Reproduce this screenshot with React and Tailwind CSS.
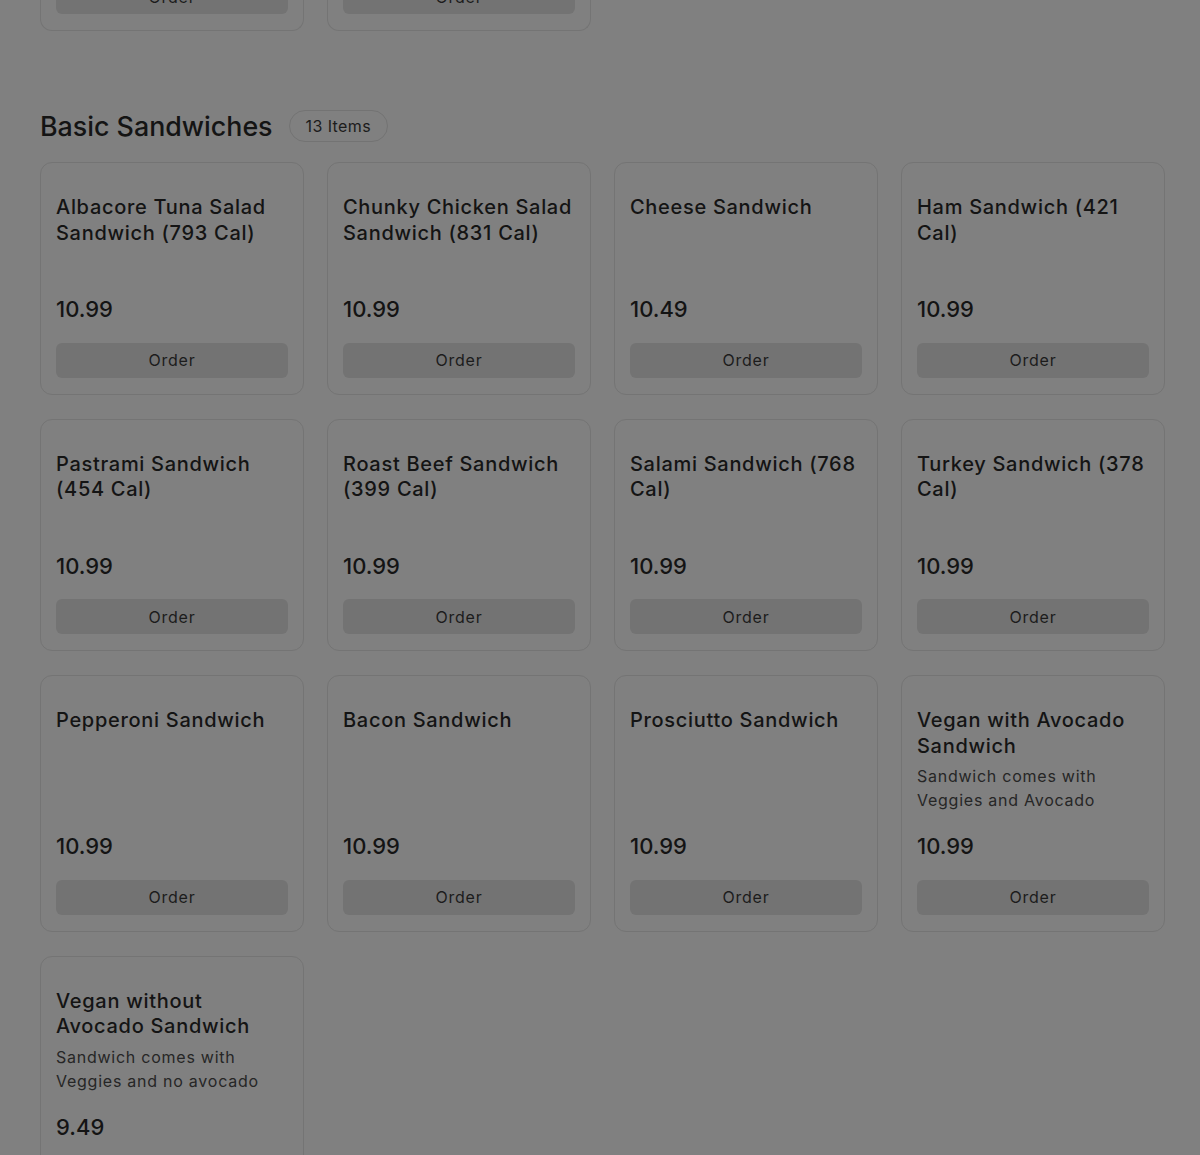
import React from "react";

const items = [
  { name: "Albacore Tuna Salad Sandwich (793 Cal)", price: "10.99" },
  { name: "Chunky Chicken Salad Sandwich (831 Cal)", price: "10.99" },
  { name: "Cheese Sandwich", price: "10.49" },
  { name: "Ham Sandwich (421 Cal)", price: "10.99" },
  { name: "Pastrami Sandwich (454 Cal)", price: "10.99" },
  { name: "Roast Beef Sandwich (399 Cal)", price: "10.99" },
  { name: "Salami Sandwich (768 Cal)", price: "10.99" },
  { name: "Turkey Sandwich (378 Cal)", price: "10.99" },
  { name: "Pepperoni Sandwich", price: "10.99" },
  { name: "Bacon Sandwich", price: "10.99" },
  { name: "Prosciutto Sandwich", price: "10.99" },
  {
    name: "Vegan with Avocado Sandwich",
    desc: "Sandwich comes with Veggies and Avocado",
    price: "10.99",
  },
  {
    name: "Vegan without Avocado Sandwich",
    desc: "Sandwich comes with Veggies and no avocado",
    price: "9.49",
  },
];

function OrderButton() {
  return (
    <button className="h-[35px] w-full rounded-[6px] bg-[#737373] text-[16px] tracking-[0.8px] text-[#1c1c1c]">
      Order
    </button>
  );
}

function Card({ item }) {
  return (
    <div className="flex flex-col rounded-[12px] border border-[#747474] px-[15px] pt-8 pb-4">
      <div className="min-h-[80px]">
        <h3 className="text-[20px] font-medium leading-[25.5px] tracking-[0.7px] text-[#141414]">
          {item.name}
        </h3>
        {item.desc && (
          <p className="mt-[5px] text-[16px] leading-[24px] tracking-[0.75px] text-[#262626]">
            {item.desc}
          </p>
        )}
      </div>
      <div className="mt-auto pt-[18px] text-[22px] font-medium leading-[32px] text-[#141414]">
        {item.price}
      </div>
      <div className="mt-[17.5px]">
        <OrderButton />
      </div>
    </div>
  );
}

export default function App() {
  return (
    <div
      className="min-h-screen bg-[#808080] pl-10"
      style={{ fontFamily: "Inter, 'Liberation Sans', sans-serif" }}
    >
      {/* tail of previous section, scrolled past the top */}
      <div className="flex h-[31px] flex-col justify-end overflow-hidden">
        <div className="grid w-[1125px] grid-cols-4 gap-x-[23px]">
          {[0, 1].map((i) => (
            <div
              key={i}
              className="rounded-b-[12px] border border-t-0 border-[#747474] px-[15px] pb-4"
            >
              <OrderButton />
            </div>
          ))}
        </div>
      </div>

      <section className="mt-[77px]">
        <div className="flex h-[36px] items-center gap-[16px]">
          <h2 className="text-[26.8px] font-medium text-[#141414]">Basic Sandwiches</h2>
          <span className="flex h-[32px] items-center rounded-full border border-[#737373] px-4 text-[16px] tracking-[0.4px] text-[#1c1c1c]">
            13 Items
          </span>
        </div>
        <div className="mt-[18px] grid w-[1125px] grid-cols-4 gap-x-[23px] gap-y-[24px]">
          {items.map((it) => (
            <Card key={it.name} item={it} />
          ))}
        </div>
      </section>
    </div>
  );
}
